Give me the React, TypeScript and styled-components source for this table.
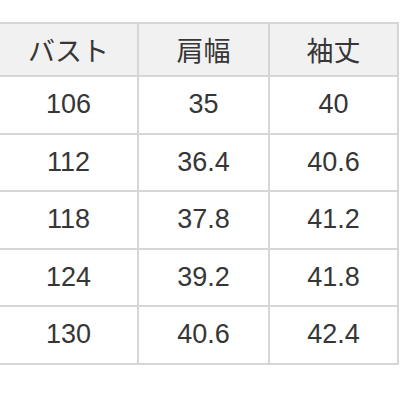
import React from 'react'
import styled, { createGlobalStyle } from 'styled-components'

const GlobalStyle = createGlobalStyle`
  html, body {
    margin: 0;
    padding: 0;
    background: #ffffff;
  }
`

const Page = styled.div`
  width: 401px;
  height: 401px;
  padding-top: 22px;
  box-sizing: border-box;
  overflow: hidden;
  background: #fff;
  font-family: 'Liberation Sans', 'Noto Sans CJK JP', sans-serif;
  color: #363636;
`

const Table = styled.table`
  border-collapse: collapse;
  table-layout: fixed;
  width: 398px;
  font-size: 27px;
`

const Col = styled.col<{ $w: number }>`
  width: ${(p) => p.$w}px;
`

const Cell = styled.td<{ $head?: boolean }>`
  border: 2px solid #d6d6d6;
  text-align: center;
  vertical-align: middle;
  padding: 0;
  height: ${(p) => (p.$head ? '51px' : '55.5px')};
  background: ${(p) => (p.$head ? '#f1f1f1' : '#fff')};
  font-weight: normal;

  &:first-child {
    border-left: none;
  }
`

const widths = [138, 131, 129]
const head = ['バスト', '肩幅', '袖丈']
const rows = [
  ['106', '35', '40'],
  ['112', '36.4', '40.6'],
  ['118', '37.8', '41.2'],
  ['124', '39.2', '41.8'],
  ['130', '40.6', '42.4'],
]

export default function App() {
  return (
    <Page>
      <GlobalStyle />
      <Table>
        <colgroup>
          {widths.map((w, i) => (
            <Col key={i} $w={w} />
          ))}
        </colgroup>
        <thead>
          <tr>
            {head.map((h) => (
              <Cell as="th" $head key={h}>
                {h}
              </Cell>
            ))}
          </tr>
        </thead>
        <tbody>
          {rows.map((r) => (
            <tr key={r[0]}>
              {r.map((v, i) => (
                <Cell key={i}>{v}</Cell>
              ))}
            </tr>
          ))}
        </tbody>
      </Table>
    </Page>
  )
}
